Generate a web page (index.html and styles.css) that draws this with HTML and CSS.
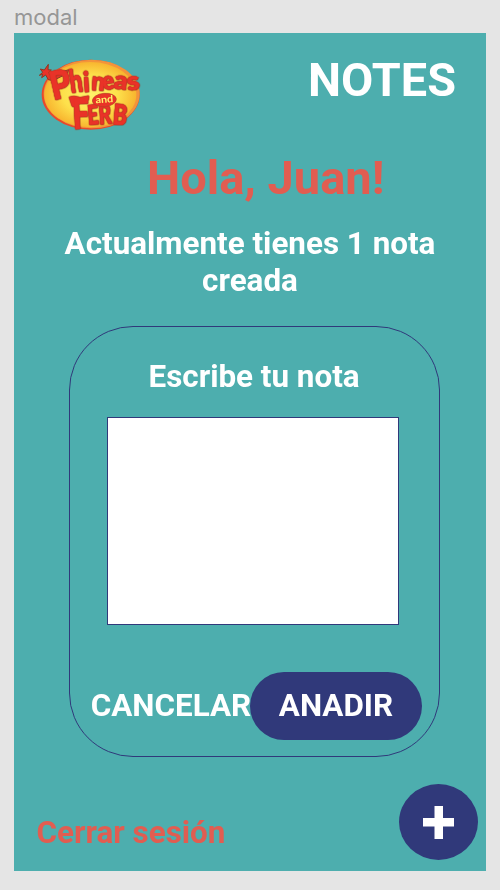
FILE: index.html
```html
<!DOCTYPE html>
<html lang="es">
<head>
<meta charset="utf-8">
<title>Notes</title>
<link rel="stylesheet" href="styles.css">
</head>
<body>
<div class="frame-label">modal</div>
<main class="screen">
  <header class="header">
    <svg class="logo" viewBox="0 0 360 270" role="img" aria-label="Phineas and Ferb">
      <defs>
        <radialGradient id="sun" cx=".5" cy=".5" r=".5">
          <stop offset="0" stop-color="#fff36b"/>
          <stop offset=".6" stop-color="#fde04b"/>
          <stop offset="1" stop-color="#f8b52f"/>
        </radialGradient>
      </defs>
      <ellipse cx="182" cy="134" rx="147" ry="105" fill="#e8492b"/>
      <ellipse cx="185" cy="132" rx="144" ry="103" fill="#f3943a"/>
      <ellipse cx="181" cy="134" rx="138" ry="98" fill="url(#sun)"/>
      <path d="M28 76l10-9-7-10 12 3 12-17-1 16 10 1-8 8 18 4 42-13-3 11-44 22-14-3-8-14-12 8 3-10z" fill="#e93328" stroke="#8b3a24" stroke-width="3"/>
      <g class="logo-big">
        <text transform="translate(70 150) rotate(-13) scale(.86 1)" font-size="116">P</text>
        <text transform="translate(123 128) rotate(-8) scale(.72 1)" font-size="94">h</text>
        <text transform="translate(161 126) rotate(-3) scale(.85 1)" font-size="84">i</text>
        <text transform="translate(183 119) rotate(4) scale(.92 1)" font-size="76">n</text>
        <text transform="translate(220 119) rotate(-7) scale(.88 1)" font-size="74">e</text>
        <text transform="translate(250 114) rotate(8) scale(1.06 1)" font-size="74">a</text>
        <text transform="translate(293 121) rotate(-7) scale(1.16 1)" font-size="74">s</text>
        <path d="M118 142l14-3 19 4 25-5-2 13-17 4-20 14-10 0z"/>
        <text transform="translate(130 237) rotate(-3) scale(.72 1)" font-size="124">F</text>
        <text transform="translate(175 224) rotate(-5) scale(.72 1)" font-size="80">E</text>
        <text transform="translate(208 223) rotate(-4) scale(.74 1)" font-size="80">R</text>
        <text transform="translate(247 222) rotate(5) scale(.76 1)" font-size="84">B</text>
      </g>
      <ellipse cx="223" cy="150" rx="36" ry="20" transform="rotate(-5 223 150)" fill="#e93328" stroke="#b64025" stroke-width="2"/>
      <text class="logo-and" x="223" y="158" transform="rotate(-4 223 150)" textLength="53" lengthAdjust="spacingAndGlyphs">and</text>
    </svg>
    <div class="brand">NOTES</div>
  </header>
  <h1 class="greeting">Hola, Juan!</h1>
  <p class="summary">Actualmente tienes 1 nota<br>creada</p>
  <section class="card">
    <label class="card-title" for="note">Escribe tu nota</label>
    <textarea class="note" id="note"></textarea>
    <div class="actions">
      <button class="btn cancel">CANCELAR</button>
      <button class="btn add">ANADIR</button>
    </div>
  </section>
  <footer class="footer">
    <a class="logout">Cerrar sesión</a>
    <button class="fab" aria-label="Nueva nota">
      <svg class="plus" viewBox="0 0 31 33"><path d="M11.500 0h8.500v12h11v8.500h-11v12.500h-8.500v-12.500h-11.500v-8.500h11.500z" fill="#fff"/></svg>
    </button>
  </footer>
</main>
</body>
</html>
```

FILE: styles.css
```css
* { box-sizing: border-box; }
body {
  margin: 0;
  height: 890px;
  overflow: hidden;
  background: #e5e5e5;
  font-family: Roboto, "Liberation Sans", sans-serif;
  font-weight: 700;
  color: #fff;
}
.frame-label {
  height: 33px;
  padding: 4px 0 0 14px;
  font: 400 22px/26px Inter, sans-serif;
  color: #969696;
}
.screen {
  display: flex;
  flex-direction: column;
  width: 472px;
  height: 838px;
  margin-left: 14px;
  background: #4daeae;
}
.header {
  display: flex;
  justify-content: space-between;
  height: 117px;
  padding: 17px 30px 0 16px;
}
.logo { width: 120px; height: 90px; }
.logo-big {
  font-family: Lato, sans-serif;
  font-weight: 900;
  fill: #e93328;
  stroke: #e93328;
  stroke-width: 2px;
  stroke-linejoin: round;
  filter: drop-shadow(1.5px 1.5px 0 #9b3222) drop-shadow(-1px -1px 0 #b64025);
}
.logo-and {
  font: 700 29px Lato, sans-serif;
  fill: #fff36b;
  text-anchor: middle;
}
.brand { font-size: 46.8px; line-height: 56px; padding-top: 2px; }
.greeting {
  margin: 0;
  height: 75px;
  padding-left: 133px;
  font-size: 47px;
  line-height: 56px;
  color: #e15d51;
}
.summary {
  margin: 0;
  height: 101px;
  font-size: 31.4px;
  line-height: 37px;
  text-align: center;
}
.card {
  display: flex;
  flex-direction: column;
  width: 371px;
  height: 431px;
  margin-left: 55px;
  padding-top: 31px;
  border: 1px solid #30397a;
  border-radius: 64px;
}
.card-title {
  height: 59px;
  padding-left: 78.5px;
  font-size: 31.4px;
  line-height: 37px;
}
.note {
  display: block;
  width: 292px;
  height: 208px;
  margin-left: 37px;
  border: 1px solid #30397a;
  background: #fff;
  resize: none;
}
.actions { display: flex; margin: 47px 0 0 20px; }
.btn {
  height: 68px;
  padding: 0;
  border: 0;
  background: none;
  color: #fff;
  font: 700 31.4px/68px Roboto, sans-serif;
}
.cancel { width: 160px; padding-left: 0.7px; text-align: left; white-space: nowrap; }
.add { width: 172px; border-radius: 34px; background: #30397a; }
.footer {
  display: flex;
  justify-content: space-between;
  padding: 27px 8px 0 22.5px;
}
.logout {
  padding-top: 30px;
  font-size: 31.4px;
  line-height: 37px;
  color: #e15d51;
}
.fab {
  display: grid;
  place-items: center;
  width: 79px;
  height: 76px;
  padding: 0;
  border: 0;
  border-radius: 50%;
  background: #30397a;
}
.plus { width: 31px; height: 33px; }
```
